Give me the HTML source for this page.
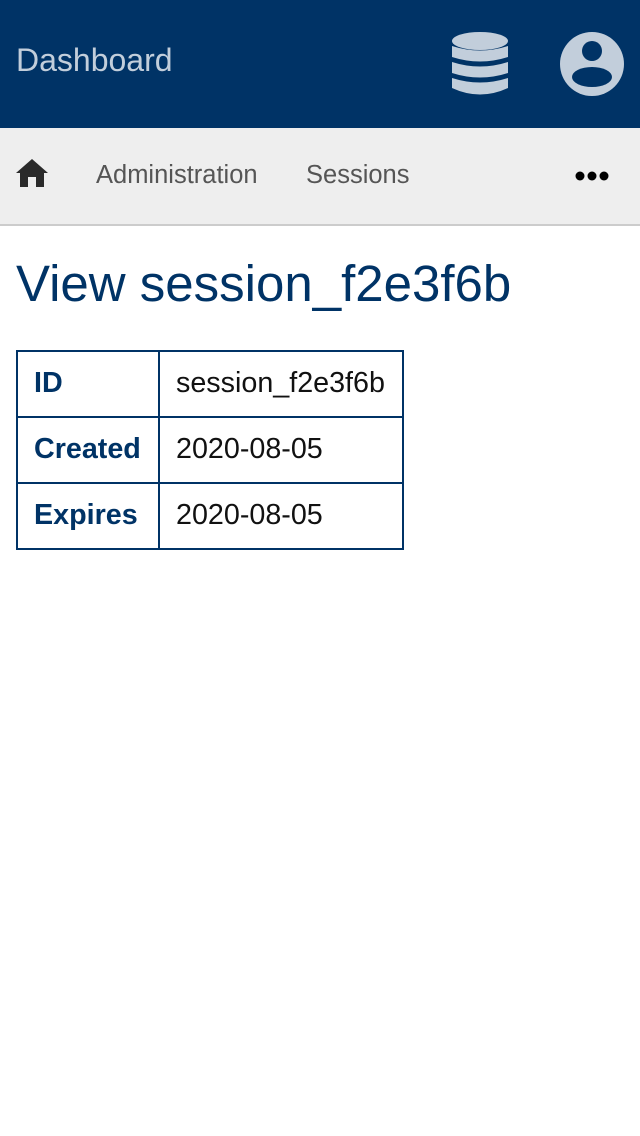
<!DOCTYPE html>
<html><head><style>
body{margin:0;width:640px;height:1136px;background:#fff;font-family:"Liberation Sans",sans-serif;position:relative;overflow:hidden}
.hdr{position:absolute;left:0;top:0;width:640px;height:128px;background:#003366}
.hdr .t{position:absolute;left:16px;top:42px;font-size:32px;color:#c2cedb}
.nav{position:absolute;left:0;top:128px;width:640px;height:96px;background:#eeeeee;border-bottom:2px solid #cccccc}
.nav span{position:absolute;top:33px;font-size:25.5px;color:#555}
h1{position:absolute;left:16px;top:254px;margin:0;font-weight:normal;font-size:51px;color:#003366}
table{position:absolute;left:16px;top:350px;border-collapse:collapse;font-size:28.7px}
td{border:2px solid #003366;height:61px;padding:0 16px 3px;line-height:30px}
td.k{font-weight:bold;color:#003366;width:108px}
td.v{color:#111;width:210px}
</style></head><body>
<div class="hdr"><div class="t">Dashboard</div>
<svg style="position:absolute;left:452px;top:31px" width="56" height="66" viewBox="0 0 56 66">
<g fill="#c2cedb">
<ellipse cx="28" cy="10" rx="28" ry="9"/>
<path d="M0 15 Q28 24 56 15 V26 Q28 35 0 26Z"/>
<path d="M0 31 Q28 40 56 31 V42 Q28 51 0 42Z"/>
<path d="M0 47 Q28 56 56 47 V57 Q28 70 0 57Z"/>
</g></svg>
<svg style="position:absolute;left:560px;top:32px" width="64" height="64" viewBox="0 0 64 64">
<circle cx="32" cy="32" r="32" fill="#c2cedb"/>
<circle cx="32" cy="19" r="10" fill="#003366"/>
<ellipse cx="32" cy="45" rx="20" ry="10" fill="#003366"/>
</svg></div>
<div class="nav">
<svg style="position:absolute;left:16px;top:30px" width="32" height="30" viewBox="0 0 32 30"><path d="M16 1 L32 15 H28 V29 H20 V19 H12 V29 H4 V15 H0Z" fill="#2a2a2a"/></svg>
<span style="left:96px">Administration</span>
<span style="left:306px">Sessions</span>
<svg style="position:absolute;left:575px;top:43px" width="34" height="10"><circle cx="5" cy="5" r="4.5"/><circle cx="17" cy="5" r="4.5"/><circle cx="29" cy="5" r="4.5"/></svg>
</div>
<h1>View session_f2e3f6b</h1>
<table>
<tr><td class="k">ID</td><td class="v">session_f2e3f6b</td></tr>
<tr><td class="k">Created</td><td class="v">2020-08-05</td></tr>
<tr><td class="k">Expires</td><td class="v">2020-08-05</td></tr>
</table>
</body></html>
